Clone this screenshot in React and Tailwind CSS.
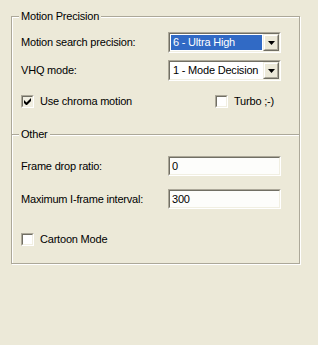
import React from 'react';

const font = { fontFamily: '"Liberation Sans", Arial, sans-serif' };

const Sunken = ({ className = '', children }) => (
  <div
    className={`border border-t-[#ACA899] border-l-[#ACA899] border-b-white border-r-white ${className}`}
  >
    <div className="w-full h-full border border-t-[#716F64] border-l-[#716F64] border-b-[#F1EFE2] border-r-[#F1EFE2]">
      {children}
    </div>
  </div>
);

const Combo = ({ value, selected }) => (
  <Sunken className="w-[113px] h-[21px]">
    <div className="flex h-full bg-white items-stretch">
      <div className="flex-1 p-[1px] flex">
        <div
          className={`flex-1 flex items-center pl-[2px] whitespace-nowrap overflow-hidden ${
            selected ? 'bg-[#316AC5] text-white' : 'text-black'
          }`}
        >
          {value}
        </div>
      </div>
      <div className="w-[16px] border border-t-[#F1EFE2] border-l-[#F1EFE2] border-b-[#716F64] border-r-[#716F64]">
        <div className="w-full h-full border border-t-white border-l-white border-b-[#ACA899] border-r-[#ACA899] bg-[#ECE9D8] flex items-center justify-center">
          <svg width="7" height="4" viewBox="0 0 7 4">
            <path d="M0 0h7L3.5 4z" fill="#000" />
          </svg>
        </div>
      </div>
    </div>
  </Sunken>
);

const TextBox = ({ value }) => (
  <Sunken className="w-[113px] h-[20px]">
    <div className="h-full bg-[#FDFDFB] flex items-center pl-[2px]">{value}</div>
  </Sunken>
);

const Check = ({ checked, label, grey }) => (
  <div className="flex items-center gap-[6px] leading-[13px]">
    <Sunken className="w-[13px] h-[13px]">
      <div className={`w-full h-full flex items-center justify-center ${grey ? 'bg-[#F1EFE2]' : 'bg-white'}`}>
        {checked && (
          <svg width="7" height="7" viewBox="0 0 7 7">
            <path d="M0 2v3l2 2h1l4-4V0L2.5 4.5z" fill="#000" />
          </svg>
        )}
      </div>
    </Sunken>
    <span>{label}</span>
  </div>
);

const Legend = ({ children }) => (
  <div className="absolute left-[7px] top-[-7px] px-[2px] bg-[#ECE9D8] leading-[13px]">{children}</div>
);

const Row = ({ label, children }) => (
  <div className="flex items-center pl-[9px] pr-[18px]">
    <span className="flex-1">{label}</span>
    {children}
  </div>
);

export default function App() {
  return (
    <div
      className="w-[318px] h-[345px] bg-[#ECE9D8] text-[11px] tracking-[-0.2px] text-black pt-[16px] pl-[11px]"
      style={font}
    >
      <div className="relative w-[289px] h-[248px] border border-[#ACA899] shadow-[inset_1px_1px_0_white,1px_1px_0_white] flex flex-col">
        <Legend>Motion Precision</Legend>
        <div className="mt-[15px]">
          <Row label="Motion search precision:">
            <Combo value="6 - Ultra High" selected />
          </Row>
        </div>
        <div className="mt-[7px]">
          <Row label="VHQ mode:">
            <Combo value="1 - Mode Decision" />
          </Row>
        </div>
        <div className="mt-[14px] flex items-center pl-[9px] pr-[18px]">
          <div className="flex-1">
            <Check checked grey label="Use chroma motion" />
          </div>
          <div className="w-[113px] pl-[47px]">
            <Check label="Turbo ;-)" />
          </div>
        </div>
        <div className="relative mt-[26px] border-t border-[#ACA899] shadow-[inset_0_1px_0_white] flex flex-col pt-[1px]">
          <Legend>Other</Legend>
          <div className="mt-[20px]">
            <Row label="Frame drop ratio:">
              <TextBox value="0" />
            </Row>
          </div>
          <div className="mt-[13px]">
            <Row label="Maximum I-frame interval:">
              <TextBox value="300" />
            </Row>
          </div>
          <div className="mt-[24px] pl-[9px]">
            <Check label="Cartoon Mode" />
          </div>
        </div>
      </div>
    </div>
  );
}
